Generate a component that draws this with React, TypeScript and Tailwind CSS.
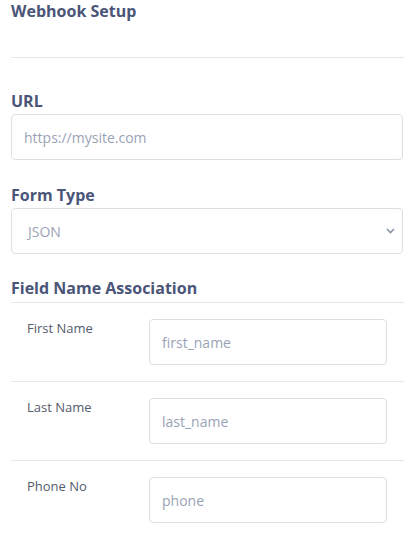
import React from "react";

const font = { fontFamily: '"Open Sans", "Noto Sans", sans-serif' };

function Row({ label, placeholder, last }: { label: string; placeholder: string; last?: boolean }) {
  return (
    <div className={`flex pt-[16px] pb-[16px] ${last ? "" : "border-b border-[#e5e7ec]"}`}>
      <div className="w-[138px] pl-[16px] text-[13px] leading-[18px] text-[#545b6b]">{label}</div>
      <div className="w-[238px]">
        <input
          className="w-full h-[46px] rounded-[4px] border border-[#dcdfe6] px-[12px] text-[14px] text-[#4a5568] placeholder:text-[#99a3b6] outline-none"
          placeholder={placeholder}
          style={font}
        />
      </div>
    </div>
  );
}

export default function App() {
  return (
    <div className="w-[415px] h-[545px] bg-white px-[11px] overflow-hidden" style={font}>
      <div className="h-[58px] pt-[1px] border-b border-[#e5e7ec]">
        <div className="text-[16px] leading-[20px] font-bold text-[#4a5578]">Webhook Setup</div>
      </div>
      <div className="mt-[31px] text-[16px] leading-[24px] font-bold text-[#4a5578]">URL</div>
      <input
        className="mt-[1px] block w-[392px] h-[46px] rounded-[4px] border border-[#dcdfe6] px-[12px] text-[14px] text-[#4a5568] placeholder:text-[#99a3b6] outline-none"
        placeholder="https://mysite.com"
        style={font}
      />
      <div className="mt-[23px] text-[16px] leading-[24px] font-bold text-[#4a5578]">Form Type</div>
      <div className="mt-[1px] relative w-[392px] h-[46px] rounded-[4px] border border-[#dcdfe6] flex items-center pl-[16px] text-[14px] text-[#99a3b6]">
        <span>JSON</span>
        <svg className="absolute right-[7px] top-[19px]" width="9" height="6" viewBox="0 0 9 6" fill="none">
          <path d="M1 1l3.5 3.5L8 1" stroke="#8a93a6" strokeWidth="1.6" />
        </svg>
      </div>
      <div className="mt-[22px] pb-[2px] border-b border-[#e5e7ec] text-[16px] leading-[24px] font-bold text-[#4a5578]">
        Field Name Association
      </div>
      <Row label="First Name" placeholder="first_name" />
      <Row label="Last Name" placeholder="last_name" />
      <Row label="Phone No" placeholder="phone" last />
    </div>
  );
}
